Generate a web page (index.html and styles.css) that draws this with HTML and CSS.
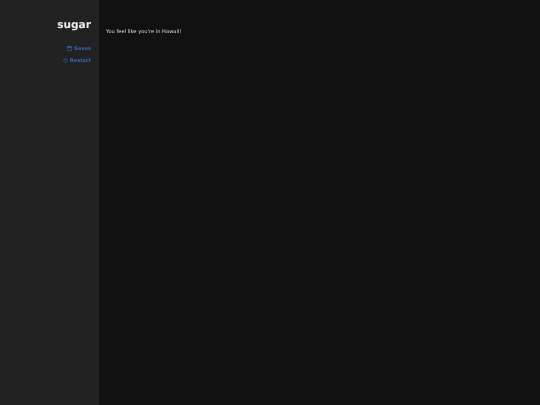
FILE: index.html
```html
<!DOCTYPE html>
<html lang="en">
<head>
<meta charset="utf-8">
<title>sugar</title>
<link rel="stylesheet" href="styles.css">
</head>
<body>
<aside class="sidebar">
  <h1 class="title">sugar</h1>
  <nav class="menu">
    <a class="link" href="#"><svg class="icon" viewBox="0 0 6 6"><path d="M.5.5h5v5h-5z" fill="none" stroke="currentColor" stroke-width=".7"/><path d="M.5.5h5v1.6h-5z" fill="currentColor"/></svg>Saves</a>
    <a class="link" href="#"><svg class="icon" viewBox="0 0 6 6"><circle cx="3" cy="3.3" r="2.2" fill="none" stroke="currentColor" stroke-width=".7"/><path d="M3 .4v2.2" stroke="currentColor" stroke-width=".7"/></svg>Restart</a>
  </nav>
</aside>
<main class="story">
  <p class="passage">You feel like you're in Hawaii!</p>
</main>
</body>
</html>
```
FILE: styles.css
```css
html, body { height: 100%; }
body {
  margin: 0;
  display: flex;
  background: #111111;
  color: #eeeeee;
  font-family: "DejaVu Sans", sans-serif;
  text-rendering: geometricPrecision;
}
.sidebar {
  box-sizing: border-box;
  width: 99px;
  flex: none;
  padding: 17px 8px 0 0;
  background: #222222;
  text-align: right;
}
.title {
  margin: 0;
  font-size: 10.6px;
  line-height: 16px;
  font-weight: bold;
  color: #eeeeee;
  will-change: opacity;
}
.menu {
  display: flex;
  flex-direction: column;
  align-items: flex-end;
  gap: 3px;
  margin-top: 12px;
}
.link {
  display: flex;
  align-items: center;
  gap: 2px;
  font-size: 5.1px;
  line-height: 8.5px;
  font-weight: bold;
  color: #3f63b8;
  text-decoration: none;
  will-change: opacity;
}
.icon { width: 5px; height: 5px; margin-bottom: 1px; }
.story { flex: 1; padding: 28px 7px 0 7px; }
.passage { margin: 0; font-size: 5.15px; line-height: 9px; color: #dddddd; will-change: opacity; }
```
